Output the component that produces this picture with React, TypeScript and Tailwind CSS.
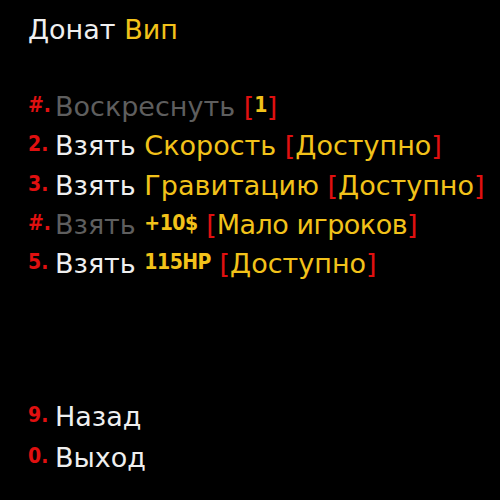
const W = "text-[#efefef]";
const Y = "text-[#f2c21a]";
const R = "text-[#e01010]";
const G = "text-[#5e5e5e]";

const cond = { fontFamily: '"DejaVu Sans Condensed", "DejaVu Sans", sans-serif' };

function Num({ n }: { n: string }) {
  return (
    <span
      className={`inline-block w-[27px] align-[4px] text-[21px] leading-none font-bold font-stretch-condensed ${R}`}
      style={cond}
    >
      {n}
    </span>
  );
}

function Small({ children }: { children: React.ReactNode }) {
  return (
    <span
      className={`align-[4px] text-[21px] leading-none font-bold font-stretch-condensed tracking-[-0.5px] ${Y}`}
      style={cond}
    >
      {children}
    </span>
  );
}

export default function App() {
  return (
    <div
      className="w-[500px] h-[500px] bg-black pl-[28px] pt-[17px] text-[27px] leading-[26px] whitespace-nowrap"
      style={{ fontFamily: '"DejaVu Sans", Verdana, sans-serif' }}
    >
      <div>
        <span className={W}>Донат </span>
        <span className={Y}>Вип</span>
      </div>

      <div className="mt-[51px] flex flex-col gap-[13.25px]">
        <div>
          <Num n="#." />
          <span className={G}>Воскреснуть </span>
          <span className={R}>[</span>
          <Small>1</Small>
          <span className={R}>]</span>
        </div>
        <div>
          <Num n="2." />
          <span className={W}>Взять </span>
          <span className={Y}>Скорость </span>
          <span className={R}>[</span>
          <span className={Y}>Доступно</span>
          <span className={R}>]</span>
        </div>
        <div>
          <Num n="3." />
          <span className={W}>Взять </span>
          <span className={Y}>Гравитацию </span>
          <span className={R}>[</span>
          <span className={Y}>Доступно</span>
          <span className={R}>]</span>
        </div>
        <div>
          <Num n="#." />
          <span className={G}>Взять </span>
          <Small>+10$</Small>
          <span className={R}> [</span>
          <span className={`${Y} tracking-[-0.5px]`}>Мало игроков</span>
          <span className={R}>]</span>
        </div>
        <div>
          <Num n="5." />
          <span className={W}>Взять </span>
          <Small>115HP</Small>
          <span className={R}> [</span>
          <span className={Y}>Доступно</span>
          <span className={R}>]</span>
        </div>
      </div>

      <div className="mt-[127px] flex flex-col gap-[15px]">
        <div>
          <Num n="9." />
          <span className={W}>Назад</span>
        </div>
        <div>
          <Num n="0." />
          <span className={W}>Выход</span>
        </div>
      </div>
    </div>
  );
}
